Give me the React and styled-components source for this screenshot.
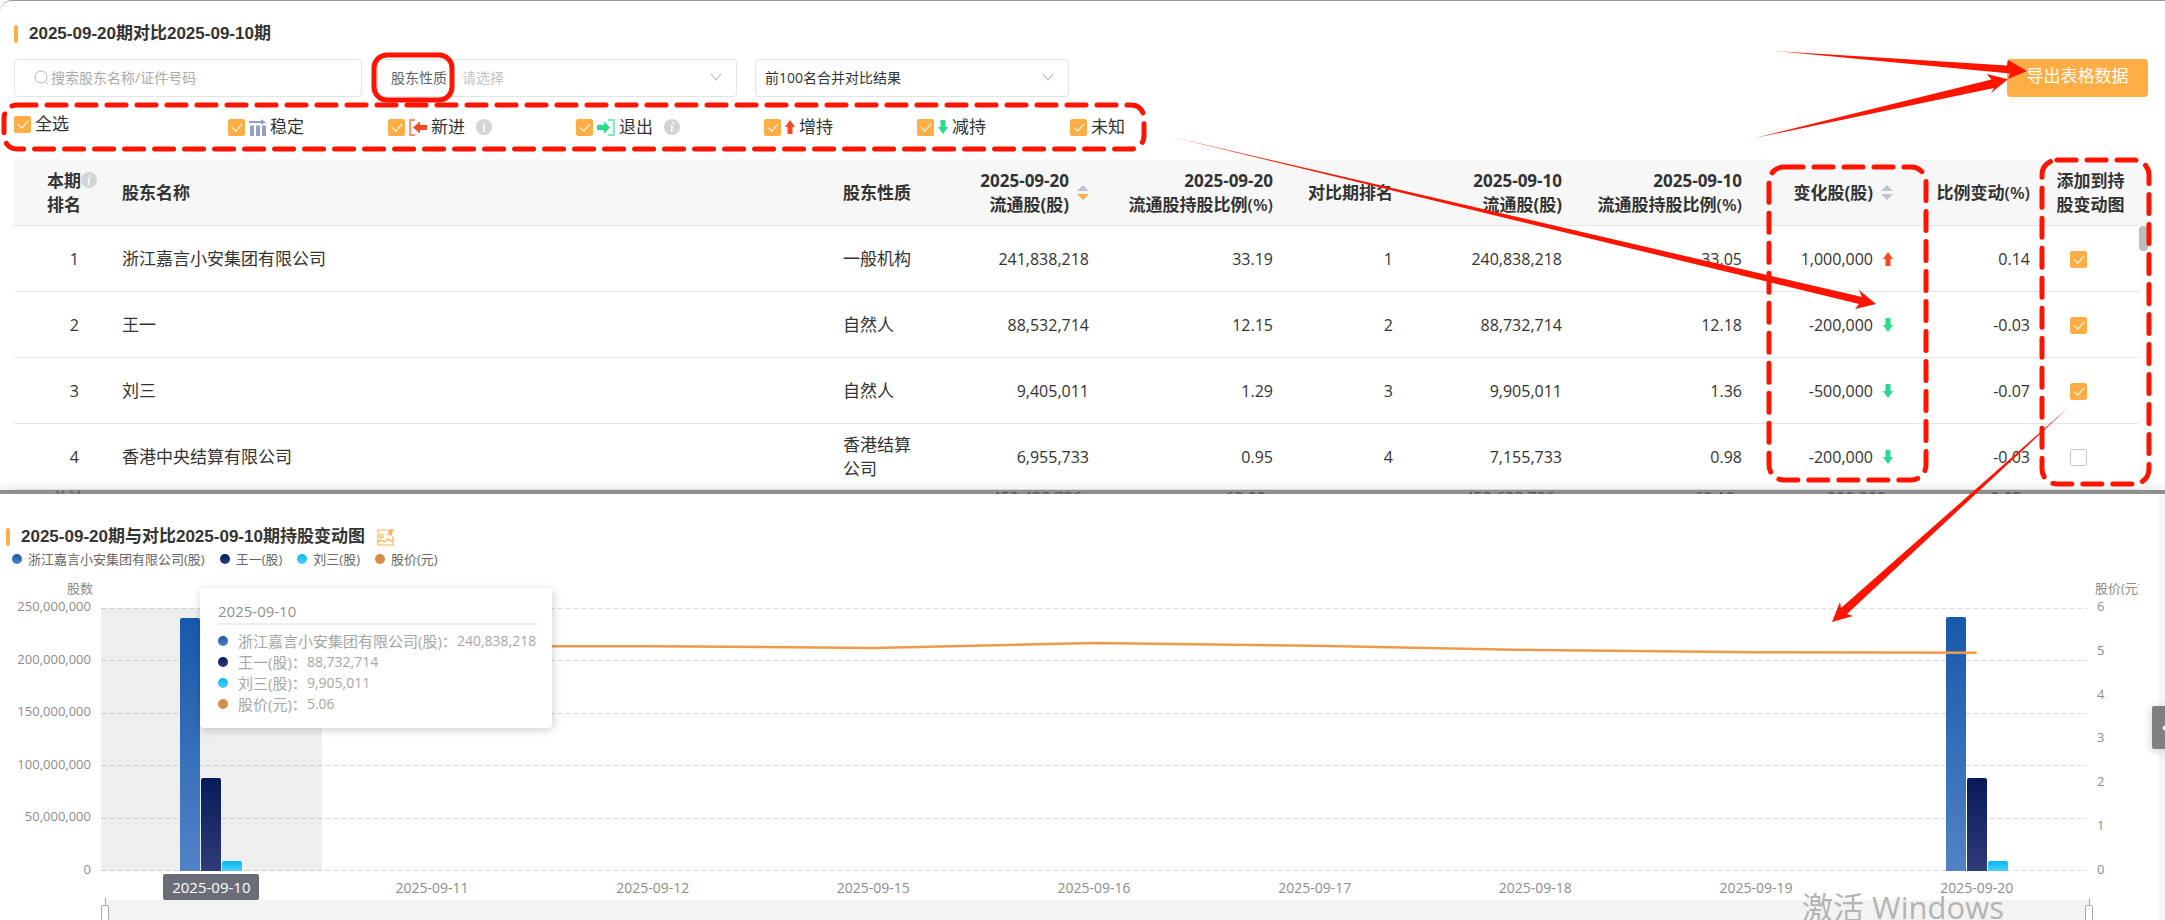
import { useState } from "react";
import styled, { createGlobalStyle } from "styled-components";

const holders = [
  { rank: 1, name: "浙江嘉言小安集团有限公司", type: "一般机构", now: "241,838,218", nowRate: "33.19", prevRank: 1, prev: "240,838,218", prevRate: "33.05", change: "1,000,000", up: true, rate: "0.14", added: true },
  { rank: 2, name: "王一", type: "自然人", now: "88,532,714", nowRate: "12.15", prevRank: 2, prev: "88,732,714", prevRate: "12.18", change: "-200,000", up: false, rate: "-0.03", added: true },
  { rank: 3, name: "刘三", type: "自然人", now: "9,405,011", nowRate: "1.29", prevRank: 3, prev: "9,905,011", prevRate: "1.36", change: "-500,000", up: false, rate: "-0.07", added: true },
  { rank: 4, name: "香港中央结算有限公司", type: "香港结算公司", now: "6,955,733", nowRate: "0.95", prevRank: 4, prev: "7,155,733", prevRate: "0.98", change: "-200,000", up: false, rate: "-0.03", added: false },
];

const colors = {
  blue: ["#1859ab", "#5182c6"],
  navy: ["#071a58", "#2f3c78"],
  cyan: ["#05b8f3", "#4dcdf8"],
  orange: ["#d68d48", "#d68d48"],
};

const series = [
  { name: "浙江嘉言小安集团有限公司(股)", color: "blue", tip: "240,838,218" },
  { name: "王一(股)", color: "navy", tip: "88,732,714" },
  { name: "刘三(股)", color: "cyan", tip: "9,905,011" },
  { name: "股价(元)", color: "orange", tip: "5.06" },
];

const days = [
  { date: "2025-09-10", price: 5.06, shares: [240838218, 88732714, 9905011] },
  { date: "2025-09-11", price: 5.13 },
  { date: "2025-09-12", price: 5.13 },
  { date: "2025-09-15", price: 5.09 },
  { date: "2025-09-16", price: 5.2 },
  { date: "2025-09-17", price: 5.14 },
  { date: "2025-09-18", price: 5.04 },
  { date: "2025-09-19", price: 4.99 },
  { date: "2025-09-20", price: 4.98, shares: [241838218, 88532714, 9405011] },
];

const maxShares = 250000000;
const shareTicks = ["250,000,000", "200,000,000", "150,000,000", "100,000,000", "50,000,000", "0"];
const priceTicks = [6, 5, 4, 3, 2, 1, 0];

const pricePoints = days
  .map((d, i) => `${(i + 0.5) * 100},${(1 - d.price / 6) * 263}`)
  .join(" ");

const UpArrow = () => (
  <svg width="10" height="14" viewBox="0 0 10 14">
    <path d="M5 0L10 7H7.500V14H2.500V7H0z" fill="#fb4a22" />
  </svg>
);

const DownArrow = () => (
  <svg width="10" height="14" viewBox="0 0 10 14">
    <path d="M5 14L10 7H7.500V0H2.500V7H0z" fill="#27dd89" />
  </svg>
);

const StableIcon = () => (
  <svg width="17" height="17" viewBox="0 0 17 17" fill="#929fc9">
    <path d="M0 2h12V0l5 3.500-5 2V4H0zM1 6.500h4V17H1zM7 6.500h4V17H7zM13 6.500h4V17h-4z" />
  </svg>
);

const EnterIcon = () => (
  <svg width="18" height="17" viewBox="0 0 18 17">
    <path d="M6 1H1.200v15H6" fill="none" stroke="#ff8d75" strokeWidth="2" />
    <path d="M4 8.500L11 2.500V6h7v5h-7v3.500z" fill="#fb4a22" />
  </svg>
);

const ExitIcon = () => (
  <svg width="18" height="17" viewBox="0 0 18 17">
    <path d="M11 1h5.800v15H11" fill="none" stroke="#7deab8" strokeWidth="2" />
    <path d="M13 8.500L7 2.500V6H0v5h7v3.500z" fill="#27dd89" />
  </svg>
);

const InfoIcon = () => (
  <svg width="16" height="16" viewBox="0 0 16 16">
    <circle cx="8" cy="8" r="8" fill="#d4d4d4" />
    <path d="M9.300 3.200l-.3 1.600M8.400 6.500L7.200 12.500M6.800 6.900l1.600-.4M7.200 12.500l1.500-.5" stroke="#fff" strokeWidth="1.400" fill="none" />
  </svg>
);

const Chevron = () => (
  <svg width="12" height="8" viewBox="0 0 12 8">
    <path d="M1 1l5 6 5-6" fill="none" stroke="#c0c4cc" strokeWidth="1.200" />
  </svg>
);

const Sorter = ({ desc }) => (
  <svg width="12" height="16" viewBox="0 0 12 16">
    <path d="M6 0l6 6H0z" fill="#c0c4cc" />
    <path d="M6 15l6-6H0z" fill={desc ? "#ffae45" : "#c0c4cc"} />
  </svg>
);

const filters = [
  { label: "稳定", icon: <StableIcon /> },
  { label: "新进", icon: <EnterIcon />, info: true },
  { label: "退出", icon: <ExitIcon />, info: true },
  { label: "增持", icon: <UpArrow /> },
  { label: "减持", icon: <DownArrow /> },
  { label: "未知" },
];

const CompareTable = () => {
  const [added, setAdded] = useState(holders.map((h) => h.added));

  const toggle = (index) => {
    setAdded(added.map((v, i) => (i === index ? !v : v)));
  };

  return (
    <TableWrap>
      <Table>
        <colgroup>
          <col width="96" />
          <col />
          <col width="106" />
          <col width="164" />
          <col width="184" />
          <col width="120" />
          <col width="169" />
          <col width="180" />
          <col width="151" />
          <col width="137" />
          <col width="97" />
        </colgroup>
        <thead>
          <tr>
            <Th $align="left">
              <RankHead>
                <span>
                  本期
                  <br />
                  排名
                </span>
                <InfoIcon />
              </RankHead>
            </Th>
            <Th $align="left">股东名称</Th>
            <Th $align="left">股东性质</Th>
            <Th>
              <SortHead>
                <span>
                  2025-09-20
                  <br />
                  流通股(股)
                </span>
                <Sorter desc />
              </SortHead>
            </Th>
            <Th>
              2025-09-20
              <br />
              流通股持股比例<Unit>(%)</Unit>
            </Th>
            <Th>对比期排名</Th>
            <Th>
              2025-09-10
              <br />
              流通股(股)
            </Th>
            <Th>
              2025-09-10
              <br />
              流通股持股比例<Unit>(%)</Unit>
            </Th>
            <Th>
              <SortHead>
                变化股(股)
                <Sorter />
              </SortHead>
            </Th>
            <Th>
              比例变动<Unit>(%)</Unit>
            </Th>
            <Th $align="center">
              添加到持
              <br />
              股变动图
            </Th>
          </tr>
        </thead>
        <tbody>
          {holders.map((h, i) => (
            <tr key={h.rank}>
              <RankCell>{h.rank}</RankCell>
              <Td>{h.name}</Td>
              <Td>{h.type}</Td>
              <NumTd>{h.now}</NumTd>
              <NumTd>{h.nowRate}</NumTd>
              <NumTd>{h.prevRank}</NumTd>
              <NumTd>{h.prev}</NumTd>
              <NumTd>{h.prevRate}</NumTd>
              <NumTd>
                <Change>
                  {h.change}
                  {h.up ? <UpArrow /> : <DownArrow />}
                </Change>
              </NumTd>
              <NumTd>{h.rate}</NumTd>
              <CheckCell>
                <Checkbox type="checkbox" aria-label={`添加${h.name}`} checked={added[i]} onChange={() => toggle(i)} />
              </CheckCell>
            </tr>
          ))}
        </tbody>
      </Table>
      <ScrollTrack>
        <ScrollThumb />
      </ScrollTrack>
    </TableWrap>
  );
};

const Chart = () => (
  <ChartGrid>
    <AxisTitle $align="right">股数</AxisTitle>
    <div />
    <AxisTitle>股价(元)</AxisTitle>

    <Ticks $align="right">
      {shareTicks.map((t) => (
        <span key={t}>{t}</span>
      ))}
    </Ticks>
    <Plot>
      <GridLines>
        {shareTicks.map((t) => (
          <GridLine key={t} />
        ))}
      </GridLines>
      <Groups>
        {days.map((d, i) => (
          <Group key={d.date} $active={i === 0}>
            {d.shares?.map((v, n) => (
              <Bar key={n} $color={series[n].color} style={{ height: `${(v / maxShares) * 100}%` }} />
            ))}
          </Group>
        ))}
      </Groups>
      <PriceLine viewBox="0 0 900 263" preserveAspectRatio="none">
        <polyline points={pricePoints} fill="none" stroke="#ee9a4b" strokeWidth="2.500" vectorEffect="non-scaling-stroke" />
      </PriceLine>
      <Tooltip>
        <TipDate>2025-09-10</TipDate>
        {series.map((s) => (
          <TipRow key={s.name}>
            <Dot $color={s.color} />
            <span>{s.name}：</span>
            <TipValue>{s.tip}</TipValue>
          </TipRow>
        ))}
      </Tooltip>
    </Plot>
    <Ticks>
      {priceTicks.map((t) => (
        <span key={t}>{t}</span>
      ))}
    </Ticks>

    <div />
    <Dates>
      {days.map((d, i) => (i === 0 ? <ActiveDate key={d.date}>{d.date}</ActiveDate> : <span key={d.date}>{d.date}</span>))}
    </Dates>
    <div />

    <div />
    <Zoom>
      <ZoomHandle />
      <ZoomBar />
      <ZoomHandle />
    </Zoom>
    <div />
  </ChartGrid>
);

export default function App() {
  return (
    <Page>
      <GlobalStyle />
      <TopPanel>
        <Title>2025-09-20期对比2025-09-10期</Title>
        <Toolbar>
          <SearchBox>
            <svg width="15" height="15" viewBox="0 0 15 15" fill="none" stroke="#b4b7bd">
              <circle cx="7" cy="7" r="6" />
              <path d="M11 11.500l3 2.500" />
            </svg>
            <SearchInput aria-label="搜索" placeholder="搜索股东名称/证件号码" />
          </SearchBox>
          <SelectBox $width={360}>
            <SelectLabel htmlFor="nature">股东性质</SelectLabel>
            <Select id="nature" $empty>
              <option>请选择</option>
            </Select>
            <Chevron />
          </SelectBox>
          <SelectBox $width={314}>
            <Select aria-label="对比范围">
              <option>前100名合并对比结果</option>
            </Select>
            <Chevron />
          </SelectBox>
          <ExportButton type="button">导出表格数据</ExportButton>
        </Toolbar>
        <Filters>
          <AllFilter>
            <Checkbox type="checkbox" defaultChecked />
            全选
          </AllFilter>
          {filters.map((f) => (
            <Filter key={f.label}>
              <Checkbox type="checkbox" defaultChecked />
              {f.icon}
              {f.label}
              {f.info && (
                <Info>
                  <InfoIcon />
                </Info>
              )}
            </Filter>
          ))}
        </Filters>
        <CompareTable />
      </TopPanel>

      <TotalStrip>
        <TotalName>总计</TotalName>
        <Total $width={191}>452,438,736</Total>
        <Total $width={184}>62.09</Total>
        <Total $width={289}>452,638,736</Total>
        <Total $width={180}>62.12</Total>
        <Total $width={151}>-200,000</Total>
        <Total $width={136}>-0.03</Total>
      </TotalStrip>

      <BottomPanel>
        <ChartArea>
          <ChartHead>
            <Title>2025-09-20期与对比2025-09-10期持股变动图</Title>
            <svg width="17" height="17" viewBox="0 0 17 17" fill="none" stroke="#ffb250" strokeWidth="1.200">
              <path d="M10 1H1v15h15V7" />
              <circle cx="4.500" cy="7" r="1.700" />
              <path d="M1 13l3-2 3 2 4-3 2 2 3-1" />
              <path d="M11 6l2-2M12 2l3-1-1 4z" fill="#ffb250" strokeWidth="2" />
            </svg>
          </ChartHead>
          <Legend>
            {series.map((s) => (
              <LegendItem key={s.name}>
                <Dot $color={s.color} />
                {s.name}
              </LegendItem>
            ))}
          </Legend>
          <Chart />
        </ChartArea>
        <PageScroll />
      </BottomPanel>

      <SideTab type="button" aria-label="展开">
        <svg width="8" height="10" viewBox="0 0 8 10">
          <path d="M0 5l5-5h3v10H5z" fill="#fff" />
        </svg>
      </SideTab>
      <Watermark>激活 Windows</Watermark>

      <LeftMarks viewBox="0 0 1160 160">
        <rect x="374" y="55" width="78" height="45" rx="13" />
        <rect x="4" y="105" width="1140" height="44" rx="13" strokeDasharray="19 11" />
      </LeftMarks>
      <RightMarks viewBox="1165 0 1000 640">
        <rect x="1769" y="167" width="157" height="313" rx="15" strokeDasharray="19 11" />
        <rect x="2042" y="160" width="107" height="324" rx="15" strokeDasharray="19 11" />
        <Arrow d="M1775 51L2007 65.500 2008 60 2027 71 2008 79 2010 73.500z" />
        <Arrow d="M1755 138L1991.500 79.500 1986.500 74 2008 79.300 1991 93 1994 88z" />
        <Arrow d="M1172 137L1862 297 1859 290 1876 304 1855 309 1859 304z" />
        <Arrow d="M2069 407L1841 608 1840 602 1832 622 1853 616 1847 614z" />
      </RightMarks>
    </Page>
  );
}

const GlobalStyle = createGlobalStyle`
  * {
    box-sizing: border-box;
  }

  body {
    margin: 0;
    background: #ffffff;
    color: #333333;
    font-family: "Open Sans", "Noto Sans CJK SC", sans-serif;
  }

  svg {
    flex-shrink: 0;
  }
`;

const Page = styled.main`
  position: relative;
  display: flex;
  flex-direction: column;
  height: 100vh;
  overflow: hidden;
`;

const TopPanel = styled.section`
  border-top: 1px solid #999999;
  border-radius: 12px 0 4px 4px;
  padding: 21px 17px 0 14px;
`;

const Title = styled.h2`
  display: flex;
  align-items: center;
  gap: 11px;
  margin: 0;
  font: bold 17px/24px "Liberation Sans", "Noto Sans CJK SC", sans-serif;

  &::before {
    content: "";
    width: 4px;
    height: 18px;
    border-radius: 2px;
    background: #ffae45;
  }
`;

const Toolbar = styled.div`
  display: flex;
  margin-top: 13px;
  height: 38px;
`;

const SearchBox = styled.div`
  display: flex;
  align-items: center;
  gap: 2px;
  width: 348px;
  padding: 0 0 2px 19px;
  margin-right: 15px;
  border: 1px solid #e2e3e6;
  border-radius: 4px;
`;

const SearchInput = styled.input`
  flex: 1;
  min-width: 0;
  border: none;
  outline: none;
  padding: 0;
  font: inherit;
  font-size: 14px;

  &::placeholder {
    color: #a9abb0;
  }
`;

const SelectBox = styled.div`
  display: flex;
  align-items: center;
  width: ${(p) => p.$width}px;
  padding: 0 14px 2px 9px;
  margin-right: 18px;
  border: 1px solid #e2e3e6;
  border-radius: 4px;
`;

const SelectLabel = styled.label`
  padding: 0 15px 0 4px;
  font-size: 14px;
  color: #606266;
`;

const Select = styled.select`
  flex: 1;
  appearance: none;
  border: none;
  outline: none;
  padding: 0;
  background: none;
  font: inherit;
  font-size: 14px;
  color: ${(p) => (p.$empty ? "#c0c4cc" : "#333333")};
`;

const ExportButton = styled.button`
  width: 141px;
  margin-left: auto;
  padding: 0 0 7px;
  border: none;
  border-radius: 4px;
  background: #ffae45;
  color: #ffffff;
  font: inherit;
  font-size: 17px;
  cursor: pointer;
`;

const Filters = styled.div`
  display: flex;
  align-items: center;
  gap: 84px;
  height: 60px;
  margin-bottom: 3px;
`;

const Filter = styled.label`
  display: flex;
  align-items: center;
  gap: 4px;
  font-size: 17px;
  line-height: 24px;
`;

const AllFilter = styled(Filter)`
  margin-right: 75px;
  padding-bottom: 6px;
`;

const Info = styled.span`
  display: flex;
  padding-left: 7px;
`;

const Checkbox = styled.input`
  appearance: none;
  display: inline-flex;
  align-items: center;
  justify-content: center;
  width: 17px;
  height: 17px;
  margin: 0;
  border: 1px solid #c8c8c8;
  border-radius: 2px;
  background: #ffffff;

  &:checked {
    border-color: #ffae45;
    background: #ffae45;
  }

  &:checked::after {
    content: "";
    width: 5px;
    height: 9px;
    margin-bottom: 3px;
    border: solid #ffffff;
    border-width: 0 1px 1px 0;
    transform: rotate(42deg);
  }
`;

const TableWrap = styled.div`
  display: flex;
`;

const Table = styled.table`
  flex: 1;
  width: 0;
  table-layout: fixed;
  border-spacing: 0;
  font-size: 17px;
  line-height: 24px;
`;

const Th = styled.th`
  height: 66px;
  padding: 0 12px;
  background: #f7f7f7;
  border-bottom: 1px solid #e6e6e6;
  text-align: ${(p) => p.$align || "right"};
  white-space: nowrap;
`;

const Unit = styled.span`
  font-weight: 600;
`;

const RankHead = styled.div`
  display: flex;
  padding-left: 21px;

  svg {
    margin-top: 3px;
  }
`;

const SortHead = styled.div`
  display: flex;
  align-items: center;
  justify-content: flex-end;
  gap: 8px;
`;

const Td = styled.td`
  height: 66px;
  padding: 0 12px;
  border-bottom: 1px solid #e6e6e6;
`;

const NumTd = styled(Td)`
  font-size: 16px;
  text-align: right;
`;

const RankCell = styled(NumTd)`
  padding-right: 31px;
`;

const CheckCell = styled(Td)`
  padding-left: 28px;

  input {
    vertical-align: middle;
  }
`;

const Change = styled.div`
  display: flex;
  align-items: center;
  justify-content: flex-end;
  gap: 10px;
`;

const ScrollTrack = styled.div`
  width: 9px;
  padding-top: 66px;
  background: linear-gradient(#f7f7f7 66px, #fcfcfc 66px);
`;

const ScrollThumb = styled.div`
  height: 25px;
  border-radius: 4px;
  background: #bdbdbd;
`;

const TotalStrip = styled.div`
  display: flex;
  flex-shrink: 0;
  height: 4px;
  padding: 0 143px 0 52px;
  overflow: hidden;
  background: #8f8f8f;
  box-shadow: 0 -2px 10px rgba(0, 0, 0, 0.16);
  color: #555555;
  font-size: 16px;
  line-height: 16px;
`;

const TotalName = styled.span`
  flex: 1;
`;

const Total = styled.span`
  width: ${(p) => p.$width}px;
  text-align: right;
`;

const BottomPanel = styled.section`
  display: flex;
  flex: 1;
  min-height: 0;
  background: #ffffff;
`;

const ChartArea = styled.div`
  flex: 1;
  min-width: 0;
  padding-top: 31px;
`;

const PageScroll = styled.div`
  width: 6px;
  background: #f5f5f5;
`;

const ChartHead = styled.div`
  display: flex;
  align-items: center;
  gap: 12px;
  padding-left: 6px;
`;

const Legend = styled.div`
  display: flex;
  gap: 15px;
  height: 20px;
  margin-bottom: 9px;
  padding-left: 12px;
  font-size: 13px;
  line-height: 20px;
  color: #666666;
`;

const LegendItem = styled.span`
  display: flex;
  align-items: center;
  gap: 6px;
`;

const Dot = styled.i`
  flex-shrink: 0;
  width: 10px;
  height: 10px;
  border-radius: 50%;
  background: linear-gradient(${(p) => colors[p.$color].join(", ")});
`;

const ChartGrid = styled.div`
  display: grid;
  grid-template-columns: 101px 1fr 72px;
  grid-template-rows: 20px 279px 21px 24px;
  font-size: 13px;
  color: #8c8c8c;
`;

const AxisTitle = styled.div`
  width: ${(p) => (p.$align ? "auto" : "52px")};
  padding: 0 8px;
  padding-right: ${(p) => (p.$align ? "8px" : "0")};
  overflow: hidden;
  line-height: 20px;
  text-align: ${(p) => p.$align || "left"};
  white-space: nowrap;
`;

const Ticks = styled.div`
  display: flex;
  flex-direction: column;
  justify-content: space-between;
  padding: 0 10px;
  line-height: 16px;
  text-align: ${(p) => p.$align || "left"};
`;

const Plot = styled.div`
  position: relative;
  height: 263px;
  margin-top: 10px;
`;

const GridLines = styled.div`
  position: absolute;
  inset: 0;
  z-index: 1;
  display: flex;
  flex-direction: column;
  justify-content: space-between;
`;

const GridLine = styled.div`
  height: 1px;
  background: repeating-linear-gradient(90deg, rgba(0, 0, 0, 0.14) 0 5px, transparent 5px 8px);
`;

const Groups = styled.div`
  display: grid;
  grid-template-columns: repeat(9, 1fr);
  height: 100%;
`;

const Group = styled.div`
  display: flex;
  align-items: flex-end;
  justify-content: center;
  gap: 1px;
  background: ${(p) => (p.$active ? "#efefef" : "none")};
`;

const Bar = styled.div`
  position: relative;
  z-index: 2;
  width: 20px;
  border-radius: 2px 2px 0 0;
  background: linear-gradient(${(p) => colors[p.$color].join(", ")});
`;

const PriceLine = styled.svg`
  position: absolute;
  inset: 0;
  z-index: 3;
  width: 100%;
  height: 100%;
`;

const Tooltip = styled.div`
  position: absolute;
  top: -20px;
  left: 99px;
  z-index: 4;
  width: 352px;
  height: 140px;
  padding: 12px 14px 12px 18px;
  border-radius: 4px;
  background: #ffffff;
  box-shadow: 1px 2px 10px rgba(0, 0, 0, 0.2);
  font-size: 15px;
  color: #a6a6a6;
  white-space: nowrap;
`;

const TipDate = styled.div`
  margin-bottom: 5px;
  border-bottom: 2px solid #eeeeee;
  line-height: 23px;
  color: #8f8f8f;
`;

const TipRow = styled.div`
  display: flex;
  align-items: center;
  height: 21px;

  ${Dot} {
    margin-right: 10px;
  }
`;

const TipValue = styled.span`
  font-size: 14px;
`;

const Dates = styled.div`
  display: grid;
  grid-template-columns: repeat(9, 1fr);
  place-items: center;
  font-size: 14px;
`;

const ActiveDate = styled.span`
  z-index: 1;
  padding: 0 9px;
  margin: -4px 0 -2px;
  border-radius: 2px;
  background: #6a6d78;
  color: #ffffff;
  font-size: 15px;
  line-height: 26px;
`;

const Zoom = styled.div`
  display: flex;
  margin: 0 -6px 0 0;
`;

const ZoomBar = styled.div`
  flex: 1;
  margin: 2px -4px 0;
  background: #f3f3f3;
`;

const ZoomHandle = styled.div`
  z-index: 1;
  width: 8px;
  margin-top: 7px;
  border: 1px solid #aaaaaa;
  border-radius: 2px;
  background: #ffffff;

  &::before {
    content: "";
    display: block;
    width: 1px;
    height: 7px;
    margin: -8px auto 0;
    background: #aaaaaa;
  }
`;

const SideTab = styled.button`
  position: absolute;
  top: 706px;
  right: 0;
  display: flex;
  align-items: center;
  justify-content: flex-end;
  width: 13px;
  height: 43px;
  padding: 0;
  overflow: hidden;
  border: none;
  border-radius: 2px 0 0 2px;
  background: #808080;
  box-shadow: 0 2px 10px rgba(0, 0, 0, 0.2);

  svg {
    margin-right: -5px;
  }
`;

const Watermark = styled.div`
  position: absolute;
  right: 161px;
  bottom: -1px;
  z-index: 5;
  font-size: 31px;
  line-height: 28px;
  color: #b4b4b4;
  pointer-events: none;
`;

const LeftMarks = styled.svg`
  position: absolute;
  top: 0;
  left: 0;
  width: 1160px;
  height: 160px;
  fill: none;
  stroke: #ff1400;
  stroke-width: 5;
  stroke-linecap: round;
  pointer-events: none;
`;

const RightMarks = styled(LeftMarks)`
  left: auto;
  right: 0;
  width: 1000px;
  height: 640px;
`;

const Arrow = styled.path`
  fill: #ff1400;
  stroke: none;
`;
